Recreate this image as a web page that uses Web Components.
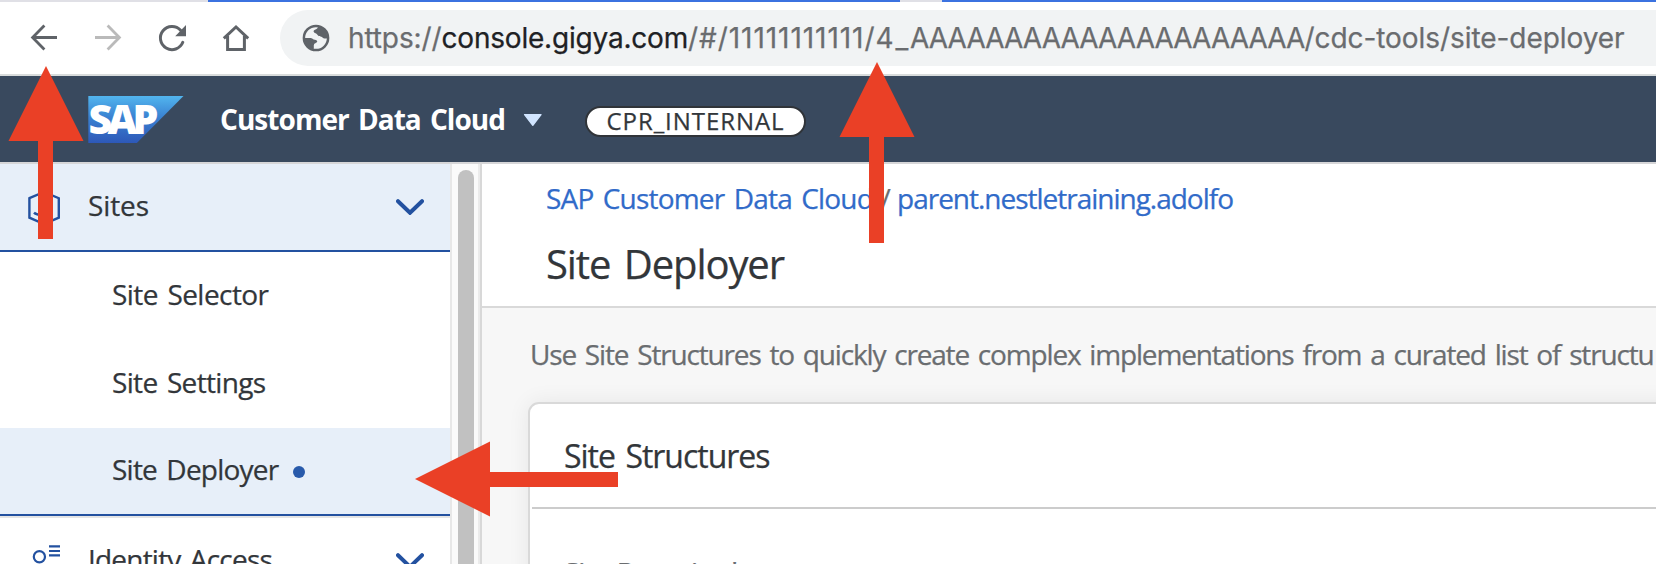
<!DOCTYPE html>
<html lang="en">
<head>
<meta charset="utf-8">
<title>Site Deployer</title>
<style>
html,body{margin:0;height:100%;overflow:hidden;background:#fff}
body{font-family:"Open Sans","Noto Sans",sans-serif;font-size:28px;color:#32363a}
</style>
</head>
<body>
<app-window></app-window>
<script>
const define = (name, html, ready) => customElements.define(name, class extends HTMLElement {
  connectedCallback() {
    if (this.shadowRoot) return;
    const t = document.createElement('template');
    t.innerHTML = html;
    this.attachShadow({ mode: 'open' }).appendChild(t.content.cloneNode(true));
    if (ready) ready(this, this.shadowRoot);
  }
});

/* Text run whose tracking is set so that it takes up the given advance width. */
define('text-run', `<style>
  :host{display:inline-block;white-space:pre;line-height:38px;font-stretch:92%;word-spacing:.1em;-webkit-text-stroke:.25px;flex:none;font-variant-ligatures:none}
</style><slot></slot>`, host => {
  const want = parseFloat(host.getAttribute('w'));
  const natural = host.getBoundingClientRect().width;
  host.style.letterSpacing = ((want - natural) / host.textContent.length) + 'px';
});

define('tab-strip', `<style>
  :host{display:flex;height:2px;background:#3b72e0}
  i{background:#e0e0e6}
  .a{width:208px}.b{width:692px}.c{width:42px}
</style><i class="a"></i><span class="b"></span><i class="c"></i>`);

define('nav-buttons', `<style>
  :host{display:block;flex:none;width:280px;height:72px}
  svg{display:block}
</style>
<svg width="280" height="72" viewBox="0 2 280 72" fill="none" stroke="#5f6368" stroke-width="2.8">
  <path d="M57 37.5H33M44.4 25.4L32.6 37.5L44.4 49.4"/>
  <path stroke="#bababa" d="M95 37.5H119M107.6 25.4L119.4 37.5L107.6 49.4"/>
  <path stroke-width="3" stroke-linecap="round" d="M182.8 42.3A11.6 11.6 0 1 1 180.6 30.2"/>
  <path fill="#5f6368" stroke="none" d="M186 25V36.2H175.2Z"/>
  <path stroke-width="3" stroke-linejoin="miter" d="M223.8 38.4L236 27L248.2 38.4M227.6 36V49.5H244.4V36"/>
</svg>`);

define('site-globe', `<style>:host{display:block;flex:none;width:28px;height:28px}svg{display:block}</style>
<svg width="28" height="28" viewBox="0 0 28 28">
  <circle cx="14" cy="14" r="12.1" fill="none" stroke="#5f6368" stroke-width="2.5"/>
  <path fill="#5f6368" d="M16.5 2.5L15.3 4.2C14.6 5.2 12.4 5.6 11.7 6.8C11 8 12.6 9 13.6 9.3C15 9.8 15.4 11.2 16.6 12C17.8 12.8 19.2 12.2 20.2 13.2C21.2 14.4 23 14.8 25.5 14.2L24.6 8.6L21 4.4Z"/>
  <path fill="#5f6368" d="M2 14H8.6C10 14 10.5 15 11.6 15.4C13 15.9 15 15.7 15.2 17.3C15.4 18.9 12.8 19 12.1 20.3C11.4 21.6 12.2 23.2 11.6 25.8L6.4 23.6L3 19.4Z"/>
</svg>`);

define('address-bar', `<style>
  :host{display:flex;align-items:center;flex:1;height:56px;margin-top:8px;align-self:flex-start;box-sizing:border-box;padding-left:22px;
    border-radius:28px 0 0 28px;background:#f1f3f4;color:#6a6c6f;font-family:Inter,"Noto Sans",sans-serif;overflow:hidden}
  .url{display:flex;margin-left:18px}
  .host{color:#202124}
</style>
<site-globe></site-globe>
<div class="url"><text-run w="93.5">https://</text-run><text-run class="host" w="246.5">console.gigya.com</text-run><text-run w="187.5">/#/11111111111/</text-run><text-run w="34.5">4_</text-run><text-run w="394.5">AAAAAAAAAAAAAAAAAAAAA</text-run><text-run w="320">/cdc-tools/site-deployer</text-run></div>`);

define('browser-bar', `<style>
  :host{display:flex;height:72px;background:#fff;border-bottom:2px solid #d9dcdc}
</style><nav-buttons></nav-buttons><address-bar></address-bar>`);

define('sap-logo', `<style>:host{display:block;flex:none;width:96px;height:47px}svg{display:block}
  text{font:800 41px "Open Sans",sans-serif;fill:#fff}</style>
<svg width="96" height="47" viewBox="0 0 96 47">
  <defs><linearGradient id="g" x1="0" y1="0" x2="0" y2="1"><stop offset="0" stop-color="#52b5ee"/><stop offset=".45" stop-color="#3a82d2"/><stop offset="1" stop-color="#2d58b8"/></linearGradient></defs>
  <path fill="url(#g)" d="M.3 0H95.5L48.8 47H.3Z"/>
  <text x="0.5" y="37.8" textLength="70" lengthAdjust="spacing">SAP</text>
</svg>`);

define('shell-header', `<style>
  :host{display:flex;align-items:center;height:86px;box-sizing:border-box;padding-left:88px;background:#39495e;border-bottom:0}
  .title{color:#fff;font-weight:700;margin:0 0 0 36px;-webkit-text-stroke:0}
  .caret{display:block;margin:1px 0 0 18px;flex:none}
  .pill{margin:4px 0 0 42px;width:221px;height:31px;box-sizing:border-box;border:2px solid #303439;border-radius:16px;background:#fff;
    font-size:24px;display:flex;align-items:center;justify-content:center}
</style>
<sap-logo></sap-logo>
<text-run class="title" w="285">Customer Data Cloud</text-run>
<svg class="caret" width="20" height="14" viewBox="0 0 20 14"><path fill="#d1e5ff" stroke="#d1e5ff" stroke-width="1.4" stroke-linejoin="round" d="M1.6 1.6H18L9.8 12.2Z"/></svg>
<div class="pill"><text-run w="178">CPR_INTERNAL</text-run></div>`);

define('nav-group', `<style>
  :host{display:flex;align-items:center;height:86px;padding:0 26px}
  :host([open]){background:#e7eff9}
  slot[name=icon]{display:block}
  .chev{margin:0 0 0 auto;display:block}
</style>
<slot name="icon"></slot><slot></slot>
<svg class="chev" width="28" height="16" viewBox="0 0 28 16"><path fill="none" stroke="#2351a0" stroke-width="4" stroke-linecap="round" d="M2 2.2L14 13.8L26 2.2"/></svg>`);

define('nav-item', `<style>
  :host{display:flex;align-items:center;height:88px;box-sizing:border-box;padding:0 0 4px 112px}
  :host([selected]){background:#e7eff9}
  :host([selected])::after{content:"";width:12px;height:12px;border-radius:50%;background:#285aab;margin:5px 0 0 14px}
</style><slot></slot>`);

define('side-nav', `<style>
  :host{display:block;flex:none;width:450px;overflow:hidden;background:#fff}
  .group{border-bottom:2px solid #2351a0}
  .last{border-bottom:2px solid #2351a0;box-shadow:0 2px #e5e5e5;margin-bottom:2px}
  svg{display:block;width:36px;height:36px}
  .lbl{margin:-4px 0 0 26px}
</style>
<nav-group class="group" open>
  <svg slot="icon" viewBox="26 189 36 36" fill="none" stroke="#2351a0" stroke-width="2.4"><path d="M29.4 198.2L44 192L58.8 198.2V217.6L44 224L29.4 217.6Z"/><path d="M34 212.6C37 215.6 49 216.5 52 214"/></svg>
  <text-run class="lbl" w="61">Sites</text-run>
</nav-group>
<nav-item><text-run w="156.5">Site Selector</text-run></nav-item>
<nav-item><text-run w="153.5">Site Settings</text-run></nav-item>
<nav-item class="last" selected><text-run w="166.5">Site Deployer</text-run></nav-item>
<nav-group>
  <svg slot="icon" viewBox="26 543 36 36" fill="none" stroke="#2351a0" stroke-width="2.2"><circle cx="39.4" cy="556.7" r="5.6"/><path d="M49 546.3H60M49 551H60M49 555.4H60"/></svg>
  <text-run class="lbl" w="184">Identity Access</text-run>
</nav-group>`);

define('scroll-track', `<style>
  :host{display:flex;flex:none;width:32px;box-sizing:border-box;background:#fafafa;border-left:2px solid #e7e7e7;border-right:2px solid #d8d8d8}
  .track{flex:1;display:flex;padding:6px 0 0 6px;border-right:2px solid #ebebeb}
  i{width:16px;height:600px;border-radius:8px;background:#c1c1c1}
</style><div class="track"><i></i></div>`);

define('page-header', `<style>
  :host{display:block;height:142px;box-sizing:content-box;background:#fff;border-bottom:2px solid #d9d9d9;padding-left:64px;overflow:hidden}
  .crumbs{display:flex;margin-top:15px;color:#316bc9}
  .sep{color:#6a6d70}
  h1{margin:20px 0 0;font-weight:400;font-size:40px;line-height:54px;display:flex}
  h1 text-run{line-height:54px}
</style>
<div class="crumbs"><text-run w="327">SAP Customer Data Cloud</text-run><text-run class="sep" w="15"> /</text-run><text-run w="345">&nbsp;parent.nestletraining.adolfo</text-run></div>
<h1><text-run w="238">Site Deployer</text-run></h1>`);

define('content-card', `<style>
  :host{display:block;margin:29px 0 0 46px;width:1300px;height:300px;background:#fff;border:2px solid #d9d9d9;border-radius:11px;box-sizing:border-box;box-shadow:0 0 22px rgba(0,0,0,.07)}
  .title{display:flex;align-items:center;height:103px;font-size:32px;margin-left:2px;padding-left:32px;border-bottom:2px solid #ccc}
  .field{display:flex;gap:14px;padding:44px 0 0 34px;color:#6a6d70}
</style>
<div class="title"><text-run w="205.5">Site Structures</text-run></div>
<div class="field"><text-run w="149">Site Domain</text-run><text-run w="15">*</text-run></div>`);

define('page-body', `<style>
  :host{display:block;background:#f7f7f7;overflow:hidden;height:256px}
  .intro{display:flex;padding:27px 0 0 48px;color:#6a6d70}
</style>
<div class="intro"><text-run w="1123.5">Use Site Structures to quickly create complex implementations from a curated list of structu</text-run></div>
<content-card></content-card>`);

/* Callout arrows pointing at the steps of the walkthrough. */
define('callout-arrows', `<style>:host{position:absolute;left:0;top:0;width:1656px;height:564px;pointer-events:none}svg{display:block}</style>
<svg width="1656" height="564" fill="#ea4026">
  <path d="M46 66L83.5 141H53V239H38V141H8.5Z"/>
  <path d="M877 62L914.5 137H884V243H869V137H839.5Z"/>
  <path d="M415 479L490 441.5V472H618V487H490V516.5Z"/>
</svg>`);

define('app-window', `<style>
  :host{display:block;position:relative;width:1656px;height:564px;overflow:hidden;background:#fff}
  .main{display:flex;height:400px;border-top:2px solid #d6d6d8}
  .page{flex:1;min-width:0;overflow:hidden}
</style>
<tab-strip></tab-strip>
<browser-bar></browser-bar>
<shell-header></shell-header>
<div class="main">
  <side-nav></side-nav><scroll-track></scroll-track>
  <div class="page"><page-header></page-header><page-body></page-body></div>
</div>
<callout-arrows></callout-arrows>`);
</script>
</body>
</html>
